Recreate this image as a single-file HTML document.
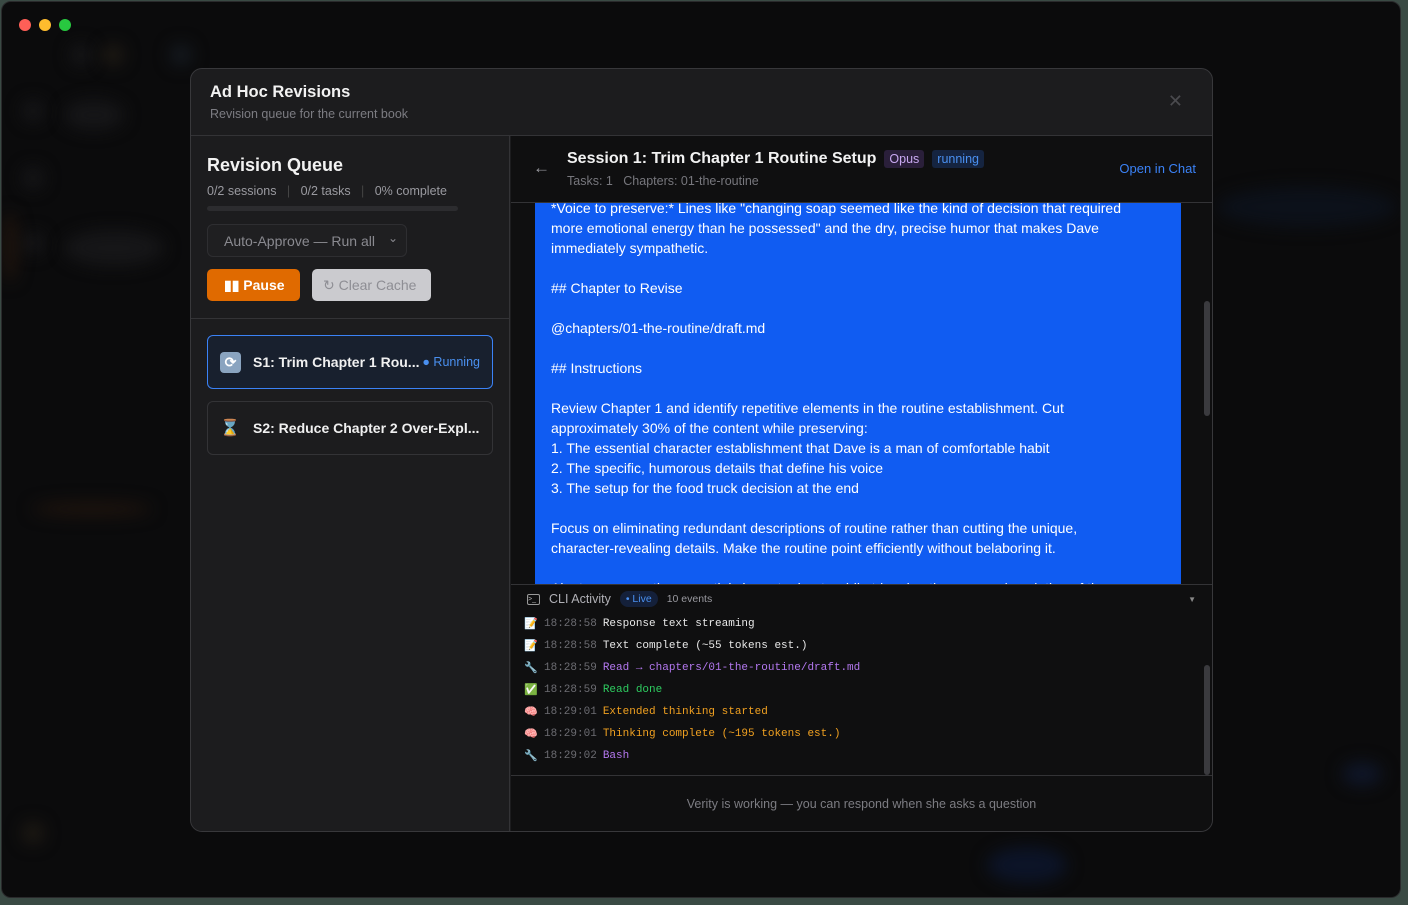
<!DOCTYPE html>
<html><head><meta charset="utf-8"><style>
*{box-sizing:border-box;margin:0;padding:0}
body{width:1408px;height:905px;background:#3a4a44;font-family:"Liberation Sans",sans-serif;overflow:hidden;position:relative}
.win{position:absolute;left:1px;top:1px;width:1400px;height:897px;border-radius:10px;background:#0b0b0c;border:1px solid #2a2a2c;overflow:hidden}
.blob{position:absolute;border-radius:50%;filter:blur(8px);background:#161618}
.dot{position:absolute;top:17px;width:12px;height:12px;border-radius:50%}
.modal{position:absolute;left:190px;top:68px;width:1023px;height:764px;background:#1c1c1e;border:1px solid #38383b;border-radius:12px;overflow:hidden}
.mh{height:67px;border-bottom:1px solid #333336;padding:14px 19px}
.mh h1{font-size:16.5px;color:#f2f2f2;font-weight:bold}
.mh p{font-size:12.5px;color:#7c7c82;margin-top:5px}
.left{position:absolute;left:0;top:67px;width:319px;bottom:0;background:#1c1c1e;border-right:1px solid #333336}
.right{position:absolute;left:320px;top:67px;right:0;bottom:0;background:#0f0f10}
.mono{font-family:"Liberation Mono",monospace}
.cli div{height:22px;font-size:11px;display:flex;align-items:center;white-space:pre}
.cli .t{color:#6c6c72;margin-right:6px}
.cli .ic{width:20px;font-size:11px}
</style></head><body>
<div class="win">
<div class="dot" style="left:17px;background:#fe5f57"></div>
<div class="dot" style="left:37px;background:#febc2e"></div>
<div class="dot" style="left:57px;background:#28c840"></div>
<div class="blob" style="left:68px;top:42px;width:22px;height:22px"></div>
<div class="blob" style="left:100px;top:42px;width:22px;height:22px;background:#1e1a14"></div>
<div class="blob" style="left:168px;top:42px;width:22px;height:22px;background:#151a20"></div>
<div class="blob" style="left:20px;top:98px;width:22px;height:22px"></div>
<div class="blob" style="left:62px;top:98px;width:60px;height:30px"></div>
<div class="blob" style="left:20px;top:165px;width:22px;height:22px"></div>
<div class="blob" style="left:20px;top:230px;width:22px;height:22px"></div>
<div class="blob" style="left:62px;top:228px;width:100px;height:36px"></div>
<div class="blob" style="left:0;top:210px;width:16px;height:70px;background:#1e140e"></div>
<div class="blob" style="left:30px;top:500px;width:120px;height:14px;background:#1e140e"></div>
<div class="blob" style="left:20px;top:820px;width:22px;height:22px;background:#1e1a14"></div>
<div class="blob" style="left:1340px;top:760px;width:40px;height:24px;background:#0f1628"></div>
<div class="blob" style="left:985px;top:845px;width:80px;height:36px;background:#0c1428"></div>
<div class="blob" style="left:1215px;top:185px;width:180px;height:40px;background:#0c111a"></div>
</div>

<div class="modal">
<div class="mh"><h1>Ad Hoc Revisions</h1><p>Revision queue for the current book</p>
<div style="position:absolute;right:29px;top:22px;color:#4a4a4e;font-size:18px">✕</div></div>
<div class="left">
<div style="padding:19px 16px 0 16px">
<div style="font-size:18px;font-weight:bold;color:#f2f2f2">Revision Queue</div>
<div style="font-size:12.5px;color:#9a9aa0;margin-top:8px">0/2 sessions &nbsp;&nbsp;<span style="color:#444">|</span>&nbsp;&nbsp; 0/2 tasks &nbsp;&nbsp;<span style="color:#444">|</span>&nbsp;&nbsp; 0% complete</div>
<div style="width:251px;height:5px;background:#2c2c2f;border-radius:3px;margin-top:8px"></div>
<div style="width:200px;height:33px;border:1px solid #2e2e31;border-radius:6px;background:#1f1f21;margin-top:13px;font-size:14px;color:#8a8a90;padding:8px 16px;position:relative">Auto-Approve — Run all<span style="position:absolute;right:8px;top:6px;font-size:12px">⌄</span></div>
<div style="display:flex;gap:12px;margin-top:12px">
<div style="width:93px;height:32px;background:#e06a00;border-radius:5px;color:#fff;font-weight:bold;font-size:14px;padding:8px 0 0 17px">▮▮ Pause</div>
<div style="width:119px;height:32px;background:#cbcbcf;border-radius:5px;color:#8e8e94;font-size:14px;padding:8px 0 0 11px">↻ Clear Cache</div>
</div></div>
<div style="border-top:1px solid #333336;margin-top:17px"></div>
<div style="margin:16px 16px 0;height:54px;border:1.5px solid #3b82f6;border-radius:6px;background:#18202e;display:flex;align-items:center;padding-left:12px;font-size:14px;color:#f0f0f0;font-weight:bold">
<span style="display:inline-block;width:21px;height:21px;background:#8aa4c0;border-radius:4px;color:#fff;text-align:center;font-size:14px;line-height:21px;margin-right:12px">⟳</span>S1: Trim Chapter 1 Rou...<span style="margin-left:auto;margin-right:12px;font-weight:normal;color:#4a90f0;font-size:12.5px">● Running</span></div>
<div style="margin:12px 16px 0;height:54px;border:1px solid #333336;border-radius:6px;display:flex;align-items:center;padding-left:12px;font-size:14px;color:#f0f0f0;font-weight:bold">
<span style="width:21px;margin-right:12px;font-size:16px">⌛</span>S2: Reduce Chapter 2 Over-Expl...</div>
</div>
<div class="right">
<div style="height:67px;border-bottom:1px solid #333336;position:relative">
<div style="position:absolute;left:22px;top:22px;color:#9a9aa0;font-size:17px">←</div>
<div style="position:absolute;left:56px;top:14px;font-size:16px;color:#f2f2f2;font-weight:bold;display:flex;align-items:center">Session 1: Trim Chapter 1 Routine Setup
<span style="font-weight:normal;font-size:12.5px;background:#2a1f3a;color:#c8a8f0;padding:2px 5px;border-radius:3px;margin-left:8px">Opus</span>
<span style="font-weight:normal;font-size:12.5px;background:#152440;color:#4a90f0;padding:2px 5px;border-radius:3px;margin-left:8px">running</span></div>
<div style="position:absolute;left:56px;top:38px;font-size:12.5px;color:#77777d">Tasks: 1 &nbsp;&nbsp;Chapters: 01-the-routine</div>
<div style="position:absolute;right:16px;top:25px;font-size:13px;color:#3b82f6">Open in Chat</div>
</div>
<div style="position:absolute;left:24px;top:67px;width:646px;height:381px;background:#105cf2;overflow:hidden;color:#fff;font-size:14px;line-height:20px">
<div style="margin-top:-5px;padding-left:16px;padding-right:42px">*Voice to preserve:* Lines like "changing soap seemed like the kind of decision that required more emotional energy than he possessed" and the dry, precise humor that makes Dave immediately sympathetic.<br><br>## Chapter to Revise<br><br>@chapters/01-the-routine/draft.md<br><br>## Instructions<br><br>Review Chapter 1 and identify repetitive elements in the routine establishment. Cut approximately 30% of the content while preserving:<br>1. The essential character establishment that Dave is a man of comfortable habit<br>2. The specific, humorous details that define his voice<br>3. The setup for the food truck decision at the end<br><br>Focus on eliminating redundant descriptions of routine rather than cutting the unique, character-revealing details. Make the routine point efficiently without belaboring it.<br><br>Aim to preserve the essential character beats while trimming the excess description of the</div></div>
<div style="position:absolute;right:2px;top:165px;width:6px;height:115px;background:#3a3a3e;border-radius:3px"></div>
<div style="position:absolute;left:0;right:0;top:448px;border-top:1px solid #333336;height:191px">
<div style="display:flex;align-items:center;height:28px;padding-left:16px;font-size:12.5px;color:#b0b0b6">
<span style="display:inline-block;width:13px;height:11px;border:1px solid #999;border-radius:2px;font-size:7px;line-height:9px;margin-right:9px;color:#bbb">&gt;_</span>CLI Activity
<span style="background:#14203a;color:#4a90f0;font-size:10.5px;padding:2px 6px;border-radius:8px;margin-left:9px">• Live</span>
<span style="font-size:10.5px;color:#9a9aa0;margin-left:9px">10 events</span>
<span style="margin-left:auto;margin-right:16px;font-size:8px;color:#888">▼</span></div>
<div class="cli mono" style="padding-left:13px">
<div><span class="ic">📝</span><span class="t">18:28:58</span><span style="color:#e8e8e8">Response text streaming</span></div>
<div><span class="ic">📝</span><span class="t">18:28:58</span><span style="color:#e8e8e8">Text complete (~55 tokens est.)</span></div>
<div><span class="ic">🔧</span><span class="t">18:28:59</span><span style="color:#b478f0">Read → chapters/01-the-routine/draft.md</span></div>
<div><span class="ic">✅</span><span class="t">18:28:59</span><span style="color:#2ecc60">Read done</span></div>
<div><span class="ic">🧠</span><span class="t">18:29:01</span><span style="color:#f0a020">Extended thinking started</span></div>
<div><span class="ic">🧠</span><span class="t">18:29:01</span><span style="color:#f0a020">Thinking complete (~195 tokens est.)</span></div>
<div><span class="ic">🔧</span><span class="t">18:29:02</span><span style="color:#b478f0">Bash</span></div>
</div>
<div style="position:absolute;right:2px;top:80px;width:6px;height:110px;background:#3a3a3e;border-radius:3px"></div>
</div>
<div style="position:absolute;left:0;right:0;top:639px;bottom:0;border-top:1px solid #333336;text-align:center;font-size:12.5px;color:#7c7c82;padding-top:21px">Verity is working — you can respond when she asks a question</div>
</div>
</div>
</body></html>
